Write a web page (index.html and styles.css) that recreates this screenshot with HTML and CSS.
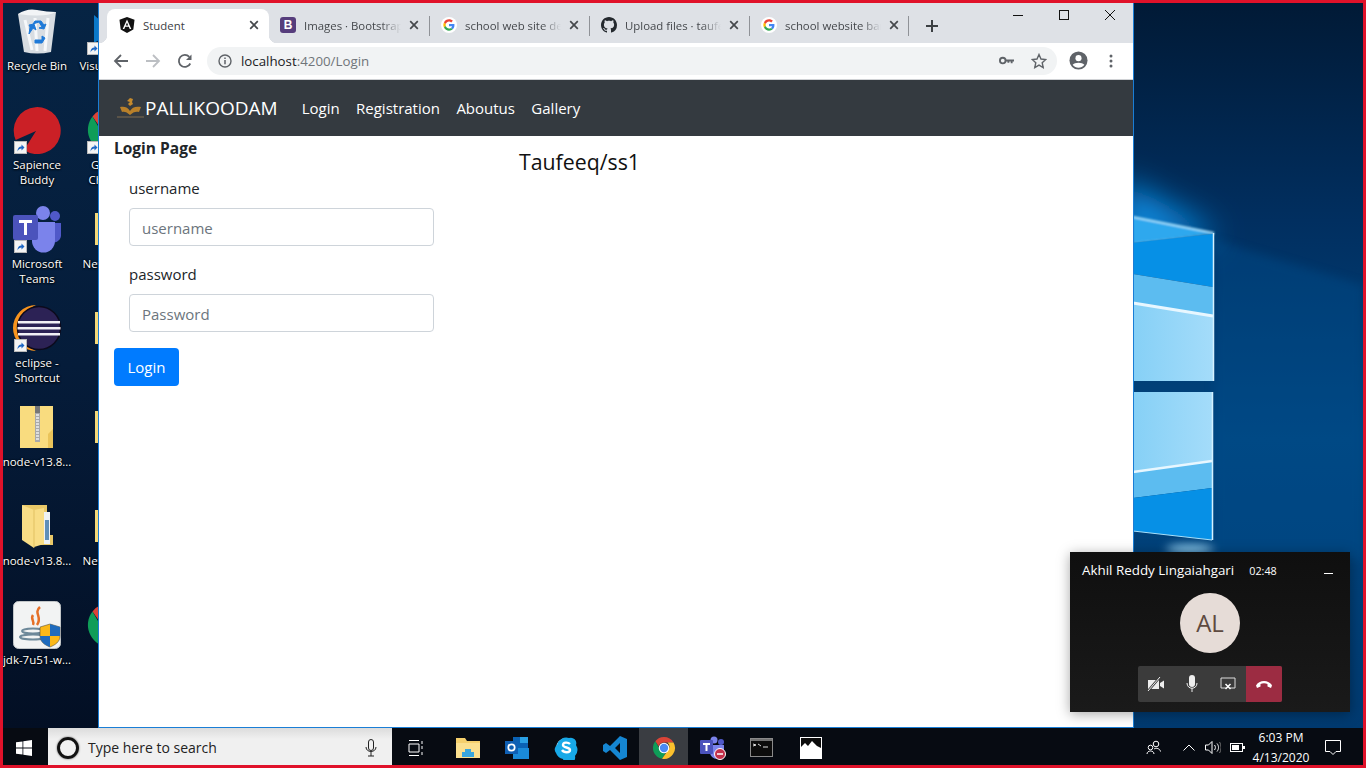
FILE: index.html
```html
<!DOCTYPE html>
<html lang="en">
<head>
<meta charset="utf-8">
<title>Student</title>
<link rel="stylesheet" href="styles.css">
</head>
<body>
<svg class="defs" width="0" height="0" aria-hidden="true">
  <defs>
    <symbol id="g-logo" viewBox="0 0 48 48">
      <circle cx="24" cy="24" r="24" fill="#fff"/>
      <g transform="translate(7 7) scale(.71)">
        <path fill="#EA4335" d="M24 9.5c3.54 0 6.71 1.22 9.21 3.6l6.85-6.85C35.9 2.38 30.47 0 24 0 14.62 0 6.51 5.38 2.56 13.22l7.98 6.19C12.43 13.72 17.74 9.5 24 9.5z"/>
        <path fill="#4285F4" d="M46.98 24.55c0-1.57-.15-3.09-.38-4.55H24v9.02h12.94c-.58 2.96-2.26 5.48-4.78 7.18l7.73 6c4.51-4.18 7.09-10.36 7.09-17.65z"/>
        <path fill="#FBBC05" d="M10.53 28.59c-.48-1.45-.76-2.99-.76-4.59s.27-3.14.76-4.59l-7.98-6.19C.92 16.46 0 20.12 0 24c0 3.88.92 7.54 2.56 10.78l7.97-6.19z"/>
        <path fill="#34A853" d="M24 48c6.48 0 11.93-2.13 15.89-5.81l-7.73-6c-2.15 1.45-4.92 2.3-8.16 2.3-6.26 0-11.57-4.22-13.47-9.91l-7.98 6.19C6.51 42.62 14.62 48 24 48z"/>
      </g>
    </symbol>
    <symbol id="close-x" viewBox="0 0 10 10">
      <path d="M1.2 1.2l7.6 7.6M8.8 1.2L1.2 8.8" stroke="#45484c" stroke-width="1.7" fill="none"/>
    </symbol>
    <symbol id="shortcut" viewBox="0 0 13 13">
      <rect width="13" height="13" fill="#f4f4f4"/>
      <rect x=".5" y=".5" width="12" height="12" fill="none" stroke="#b9b9b9"/>
      <path d="M3.5 10.5c0-3.5 1.5-5 4-5V3.5l3 3-3 3V7.500c-1.700 0-3 .8-4 3z" fill="#1c66c4"/>
    </symbol>
    <symbol id="chrome" viewBox="0 0 48 48">
      <path fill="#db4437" d="M24 2a22 22 0 0 1 19 11H24a11 11 0 0 0-10.500 7.500L6.500 10.500A22 22 0 0 1 24 2z"/>
      <path fill="#0f9d58" d="M6.500 10.500l9.500 16.500a11 11 0 0 0 11 7.700L20 45.600A22 22 0 0 1 6.500 10.500z"/>
      <path fill="#fbc02d" d="M43 13a22 22 0 0 1-23 32.600L31 30a11 11 0 0 0 0-17z"/>
      <circle cx="24" cy="24" r="10.500" fill="#fff"/>
      <circle cx="24" cy="24" r="8.300" fill="#4a8af4"/>
    </symbol>
    <symbol id="folder" viewBox="0 0 40 40">
      <path d="M5 4h30v32H5z" fill="#f6d978"/>
      <path d="M35 4v12l-4 4v16h4z" fill="#e8c55f"/>
    </symbol>
  </defs>
</svg>

<div class="screen">
  <div class="desktop">
    <svg class="wallpaper" viewBox="3 3 1360 725" preserveAspectRatio="none" aria-hidden="true">
      <defs>
        <linearGradient id="wall" x1="0" y1="0" x2="0" y2="1">
          <stop offset="0" stop-color="#011a36"/>
          <stop offset=".3" stop-color="#012f60"/>
          <stop offset=".6" stop-color="#01457f"/>
          <stop offset="1" stop-color="#003a70"/>
        </linearGradient>
        <linearGradient id="left" x1="0" y1="0" x2="0" y2="1">
          <stop offset="0" stop-color="#062444"/>
          <stop offset=".5" stop-color="#051c3a"/>
          <stop offset="1" stop-color="#030f24"/>
        </linearGradient>
        <linearGradient id="pane" x1="0" y1="0" x2="1" y2="0">
          <stop offset="0" stop-color="#86d0f6"/>
          <stop offset="1" stop-color="#a4dcfa"/>
        </linearGradient>
        <filter id="blur18" x="-60%" y="-60%" width="220%" height="220%"><feGaussianBlur stdDeviation="16"/></filter>
        <filter id="blur6" x="-40%" y="-80%" width="180%" height="260%"><feGaussianBlur stdDeviation="5"/></filter>
        <filter id="blur1" x="-20%" y="-20%" width="140%" height="140%"><feGaussianBlur stdDeviation=".8"/></filter>
      </defs>
      <rect x="3" y="3" width="1360" height="725" fill="url(#wall)"/>
      <rect x="3" y="3" width="130" height="725" fill="url(#left)"/>
      <path d="M1214 240L1363 285V560H1214z" fill="#01508f" opacity=".4" filter="url(#blur6)"/>
      <path d="M1120 180L1205 226L1214 240H1120z" fill="#0a8ee4" filter="url(#blur18)"/>
      <g filter="url(#blur1)">
        <path d="M1133 217L1214 233L1133 243z" fill="#2ea8ee"/>
        <path d="M1133 217L1214 233" stroke="#a8e0fb" stroke-width="2"/>
        <path d="M1133 243L1214 234" stroke="#5cc0f4" stroke-width="1"/>
      </g>
      <path d="M1133 243L1213 234V287L1133 274z" fill="#0690e6"/>
      <path d="M1133 274L1213 287V316L1133 303z" fill="#5cbcf0"/>
      <path d="M1133 303L1213 316V381H1133z" fill="url(#pane)"/>
      <path d="M1133 303L1213 316" stroke="#e8f7ff" stroke-width="3"/>
      <path d="M1133 392H1212V461L1133 472z" fill="url(#pane)"/>
      <path d="M1133 472L1212 461V488L1133 498z" fill="#5cbcf0"/>
      <path d="M1133 472L1212 461" stroke="#e8f7ff" stroke-width="2.500"/>
      <path d="M1133 498L1212 488V540L1133 531z" fill="#0690e6"/>
      <path d="M1133 531L1212 540" stroke="#a8e0fb" stroke-width="1"/>
      <path d="M1213.500 233V381M1212.500 392V540" stroke="#d5f1ff" stroke-width="1.500"/>
      <ellipse cx="1190" cy="549" rx="24" ry="4" fill="#9fdcfb" filter="url(#blur6)"/>
    </svg>

    <div class="icons">
      <div class="dicon">
        <div class="dicon-art">
          <svg width="44" height="46" viewBox="0 0 44 46">
            <path d="M3 6L41 4L36 44Q22 47 9 44z" fill="#d8dde2"/>
            <path d="M3 6Q12 0 22 2T41 4Q30 10 3 6z" fill="#f2f4f6"/>
            <path d="M10 12l7 30M20 10l2 33M33 10l-3 33" stroke="#f6f8fa" stroke-width="3" fill="none"/>
            <path d="M18 16l6-2 3 5-3 1 5 1 2-5-2 1-3-4h-6zM14 26l4-6 3 2-2-6-5 1 1 2zM20 35h7l3-5-3-2v4h-7z" fill="#1f7ad8" stroke="#1f7ad8" stroke-width="1"/>
          </svg>
        </div>
        <div class="dicon-label">Recycle Bin</div>
      </div>
      <div class="dicon">
        <div class="dicon-art">
          <svg width="40" height="44" viewBox="0 0 40 44"><path d="M4 6L20 20L36 2V38L20 24L4 34z" fill="#0a78c8"/></svg>
          <svg class="badge" width="13" height="13"><use href="#shortcut"/></svg>
        </div>
        <div class="dicon-label dicon-line">Visual Stu...</div>
      </div>

      <div class="dicon">
        <div class="dicon-art">
          <svg width="48" height="48" viewBox="0 0 48 48"><path d="M2.700 34A23.500 23.500 0 1 1 11 44L23 25z" fill="#cb2026"/></svg>
          <svg class="badge" width="13" height="13"><use href="#shortcut"/></svg>
        </div>
        <div class="dicon-label">Sapience Buddy</div>
      </div>
      <div class="dicon">
        <div class="dicon-art">
          <svg width="48" height="48"><use href="#chrome"/></svg>
          <svg class="badge" width="13" height="13"><use href="#shortcut"/></svg>
        </div>
        <div class="dicon-label">Google Chrome</div>
      </div>

      <div class="dicon">
        <div class="dicon-art">
          <svg width="50" height="48" viewBox="0 0 50 48">
            <circle cx="31" cy="8" r="7" fill="#7b83eb"/>
            <circle cx="43" cy="11" r="5" fill="#5059c9"/>
            <path d="M38 18h11v13a7 7 0 0 1-11 5z" fill="#5059c9"/>
            <path d="M20 17h23v19a11.500 11.500 0 0 1-23 0z" fill="#7b83eb"/>
            <rect x="1" y="10" width="25" height="25" rx="2" fill="#4b53bc"/>
            <path d="M7 15h13v3h-5v12h-3V18H7z" fill="#fff"/>
          </svg>
          <svg class="badge" width="13" height="13"><use href="#shortcut"/></svg>
        </div>
        <div class="dicon-label">Microsoft Teams</div>
      </div>
      <div class="dicon">
        <div class="dicon-art"><svg width="40" height="40"><use href="#folder"/></svg></div>
        <div class="dicon-label dicon-line dicon-shift">New folder</div>
      </div>

      <div class="dicon">
        <div class="dicon-art">
          <svg width="50" height="46" viewBox="0 0 50 46">
            <path d="M24 0A23 23 0 0 0 24 46A25 25 0 0 1 24 0z" fill="#f7941e"/>
            <circle cx="27" cy="23" r="21.500" fill="#2c2255" stroke="#0c0a1c" stroke-width="1.500"/>
            <path d="M6 16h42v2.500H6zM5.500 22h43v2.500h-43zM6 28h42v2.500H6z" fill="#f2f0f6"/>
          </svg>
          <svg class="badge" width="13" height="13"><use href="#shortcut"/></svg>
        </div>
        <div class="dicon-label">eclipse - Shortcut</div>
      </div>
      <div class="dicon">
        <div class="dicon-art"><svg width="40" height="40"><use href="#folder"/></svg></div>
        <div class="dicon-label"></div>
      </div>

      <div class="dicon">
        <div class="dicon-art">
          <svg width="36" height="44" viewBox="0 0 36 44">
            <path d="M1 1h33v42H1z" fill="#f9dc7f"/>
            <path d="M34 24l-5 5v14h5z" fill="#eac45a"/>
            <rect x="16" y="1" width="5" height="36" fill="#a9a9a9"/>
            <rect x="16" y="1" width="5" height="7" fill="#777"/>
            <path d="M17 10h3M17 13h3M17 16h3M17 19h3M17 22h3M17 25h3M17 28h3M17 31h3M17 34h3" stroke="#eee" stroke-width="1.500"/>
          </svg>
        </div>
        <div class="dicon-label dicon-line">node-v13.8...</div>
      </div>
      <div class="dicon">
        <div class="dicon-art"><svg width="40" height="40"><use href="#folder"/></svg></div>
        <div class="dicon-label"></div>
      </div>

      <div class="dicon">
        <div class="dicon-art">
          <svg width="32" height="44" viewBox="0 0 32 44">
            <path d="M1 1h25v30h6v10H12z" fill="#e9c868"/>
            <path d="M22 8h7v32h-7z" fill="#eef2f5"/>
            <path d="M24 16h4v20h-4z" fill="#5f8fb8"/>
            <path d="M13 6l10-2v36l-10 3z" fill="#f8dd86"/>
            <path d="M1 1l12 5v38L1 36z" fill="#f8dd86"/>
            <path d="M13 6v38" stroke="#d8b455" stroke-width=".7"/>
          </svg>
        </div>
        <div class="dicon-label dicon-line">node-v13.8...</div>
      </div>
      <div class="dicon">
        <div class="dicon-art"><svg width="40" height="40"><use href="#folder"/></svg></div>
        <div class="dicon-label dicon-line dicon-shift">New folder</div>
      </div>

      <div class="dicon">
        <div class="dicon-art">
          <svg width="48" height="48" viewBox="0 0 48 48">
            <rect x=".5" y=".5" width="47" height="47" rx="5" fill="#f2f3f3" stroke="#c2c6c8"/>
            <path d="M27 6c-7 6 3 10-3 18M20 14c-3 4 2 6 0 10" stroke="#e56f26" stroke-width="2.500" fill="none"/>
            <ellipse cx="20" cy="30" rx="11" ry="2.500" fill="none" stroke="#6d8899" stroke-width="2"/>
            <ellipse cx="20" cy="36" rx="13" ry="2.500" fill="none" stroke="#6d8899" stroke-width="2"/>
            <path d="M27 26l10-3 10 3v9c0 6-5 9-10 11-5-2-10-5-10-11z" fill="#fbb818" stroke="#3a3a3a" stroke-width=".5"/>
            <path d="M37 23l10 3v9H37zM27 35h10v11c-5-2-10-5-10-11z" fill="#1f6bbd"/>
          </svg>
        </div>
        <div class="dicon-label dicon-line">jdk-7u51-w...</div>
      </div>
      <div class="dicon">
        <div class="dicon-art"><svg width="48" height="48"><use href="#chrome"/></svg></div>
        <div class="dicon-label"></div>
      </div>
    </div>

    <section class="browser">
      <div class="tabstrip">
        <div class="tab tab-active">
          <svg class="favicon" viewBox="0 0 16 16"><path d="M8 0l7.500 2.700-1.200 9.900L8 16l-6.300-3.400L.5 2.700z" fill="#111"/><path d="M8 2.500L3.700 12h1.600l.9-2.200h3.600l.9 2.200h1.600zM6.800 8.500L8 5.600l1.200 2.900z" fill="#fff"/></svg>
          <span class="tab-title">Student</span>
          <svg class="tab-close" width="10" height="10"><use href="#close-x"/></svg>
        </div>
        <div class="tab tab-first">
          <span class="bs-icon">B</span>
          <span class="tab-title">Images · Bootstrap</span>
          <svg class="tab-close" width="10" height="10"><use href="#close-x"/></svg>
        </div>
        <div class="tab tab-sep">
          <svg class="favicon"><use href="#g-logo"/></svg>
          <span class="tab-title">school web site design</span>
          <svg class="tab-close" width="10" height="10"><use href="#close-x"/></svg>
        </div>
        <div class="tab tab-sep">
          <svg class="favicon" viewBox="0 0 16 16"><path fill="#24292e" d="M8 0C3.580 0 0 3.580 0 8c0 3.540 2.290 6.530 5.470 7.590.4.070.55-.17.55-.38 0-.19-.01-.82-.01-1.490-2.010.37-2.530-.49-2.690-.94-.09-.23-.48-.94-.82-1.130-.28-.15-.68-.52-.01-.53.63-.01 1.080.58 1.230.82.72 1.210 1.870.87 2.330.66.07-.52.28-.87.51-1.070-1.780-.2-3.640-.89-3.640-3.950 0-.87.31-1.590.82-2.150-.08-.2-.36-1.020.08-2.120 0 0 .67-.21 2.200.82.64-.18 1.320-.27 2-.27.68 0 1.360.09 2 .27 1.530-1.040 2.200-.82 2.200-.82.44 1.100.16 1.920.08 2.120.51.56.82 1.270.82 2.150 0 3.070-1.870 3.750-3.650 3.950.29.25.54.73.54 1.480 0 1.070-.01 1.930-.01 2.200 0 .21.15.46.55.38A8.013 8.013 0 0 0 16 8c0-4.420-3.580-8-8-8z"/></svg>
          <span class="tab-title">Upload files · taufeeq</span>
          <svg class="tab-close" width="10" height="10"><use href="#close-x"/></svg>
        </div>
        <div class="tab tab-sep tab-end">
          <svg class="favicon"><use href="#g-logo"/></svg>
          <span class="tab-title">school website banner</span>
          <svg class="tab-close" width="10" height="10"><use href="#close-x"/></svg>
        </div>
        <svg class="newtab" width="12" height="12" viewBox="0 0 12 12"><path d="M6 0v12M0 6h12" stroke="#3c4043" stroke-width="2"/></svg>
        <div class="winctl">
          <svg width="10" height="10" viewBox="0 0 10 10"><path d="M0 5.500h10" stroke="#111"/></svg>
          <svg width="10" height="10" viewBox="0 0 10 10"><rect x=".5" y=".5" width="9" height="9" fill="none" stroke="#111"/></svg>
          <svg width="10" height="10" viewBox="0 0 10 10"><path d="M0 0l10 10M10 0L0 10" stroke="#111"/></svg>
        </div>
      </div>

      <div class="toolbar">
        <svg class="tb-btn" viewBox="0 0 16 16"><path d="M15 8H2.500M8 2L2 8l6 6" fill="none" stroke="#5f6368" stroke-width="1.800"/></svg>
        <svg class="tb-btn" viewBox="0 0 16 16"><path d="M1 8h12.500M8 2l6 6-6 6" fill="none" stroke="#bcbfc3" stroke-width="1.800"/></svg>
        <svg class="tb-btn tb-reload" viewBox="0 0 16 16"><path d="M13.300 10.500A6 6 0 1 1 12.300 3.800" fill="none" stroke="#5f6368" stroke-width="1.800"/><path d="M14.500 1.500v5.500H9z" fill="#5f6368"/></svg>
        <div class="omnibox">
          <svg class="omni-info" viewBox="0 0 14 14"><circle cx="7" cy="7" r="6" fill="none" stroke="#5f6368" stroke-width="1.400"/><path d="M7 6v4.200M7 3.500v1.500" stroke="#5f6368" stroke-width="1.500"/></svg>
          <span class="url"><span class="url-host">localhost</span>:4200/Login</span>
          <svg class="omni-key" viewBox="0 0 16 9"><circle cx="4" cy="4.500" r="3" fill="none" stroke="#5f6368" stroke-width="2"/><path d="M7 3.500h9v2h-1.500v2h-2v-2H11v1.500H9V5.500H7z" fill="#5f6368"/></svg>
          <svg class="omni-star" viewBox="0 0 16 16"><path d="M8 1.500l2 4.500 4.800.5-3.600 3.200 1 4.800L8 12.100l-4.200 2.400 1-4.800L1.200 6.500 6 6z" fill="none" stroke="#5f6368" stroke-width="1.400"/></svg>
        </div>
        <svg class="tb-profile" viewBox="0 0 20 20"><circle cx="10" cy="10" r="9.500" fill="#5f6368"/><circle cx="10" cy="7.500" r="3.200" fill="#fff"/><path d="M3.800 14.500c2-3 10.400-3 12.400 0-3 4-9.400 4-12.400 0z" fill="#fff"/></svg>
        <svg class="tb-dots" viewBox="0 0 4 14"><circle cx="2" cy="2" r="1.500" fill="#5f6368"/><circle cx="2" cy="7" r="1.500" fill="#5f6368"/><circle cx="2" cy="12" r="1.500" fill="#5f6368"/></svg>
      </div>

      <nav class="navbar">
        <svg class="brand-logo" width="29" height="24" viewBox="0 0 29 24">
          <path d="M14 2l3 1-1 3 1 2-3 2-2-2 2-2-3-1z" fill="#c58a2c"/>
          <path d="M4 11c4-1 8 0 10 4 2-4 6-5 11-4l-2 5c-3-1-6 0-9 3-3-3-6-4-8-3z" fill="#b9802a"/>
          <path d="M1 20h27v2H1z" fill="#5a5348"/>
        </svg>
        <a class="brand">PALLIKOODAM</a>
        <a class="navlink">Login</a>
        <a class="navlink">Registration</a>
        <a class="navlink">Aboutus</a>
        <a class="navlink">Gallery</a>
      </nav>

      <main class="page">
        <div class="login-col">
          <h1 class="login-title">Login Page</h1>
          <form class="login-form">
            <div class="form-group">
              <label class="form-label">username</label>
              <input class="form-input" type="text" placeholder="username">
            </div>
            <div class="form-group">
              <label class="form-label">password</label>
              <input class="form-input" type="password" placeholder="Password">
            </div>
          </form>
          <button class="login-btn" type="button">Login</button>
        </div>
        <h2 class="repo-title">Taufeeq/ss1</h2>
      </main>
    </section>

    <aside class="call">
      <div class="call-head">
        <span class="call-name">Akhil Reddy Lingaiahgari</span>
        <span class="call-time">02:48</span>
        <span class="call-min"></span>
      </div>
      <div class="call-avatar">AL</div>
      <div class="call-controls">
        <span class="call-btn"><svg width="18" height="16" viewBox="0 0 18 16"><path d="M1 4h11v9H1zM13 7l4-2.500v8L13 10z" fill="#eee"/><path d="M1 15L13 1" stroke="#3b3b3b" stroke-width="2.500"/><path d="M1 15L13 1" stroke="#eee" stroke-width="1"/></svg></span>
        <span class="call-btn"><svg width="12" height="18" viewBox="0 0 12 18"><rect x="3" y="0" width="6" height="12" rx="3" fill="#eee"/><path d="M1 8c0 7 10 7 10 0M6 13v4" fill="none" stroke="#eee" stroke-width="1"/></svg></span>
        <span class="call-btn"><svg width="16" height="14" viewBox="0 0 16 14"><path d="M6 11H1V1h14v10h-5" fill="none" stroke="#ddd"/><path d="M5.500 7l5 5M10.500 7l-5 5" stroke="#fff" stroke-width="1.500"/></svg></span>
        <span class="call-btn call-hang"><svg width="16" height="8" viewBox="0 0 16 8"><path d="M0 5.500C3-.5 13-.5 16 5.500L15 8l-3.500-1.500V4c-2-1-5-1-7 0v2.500L1 8z" fill="#fff"/></svg></span>
      </div>
    </aside>
  </div>

  <footer class="taskbar">
    <div class="start"><svg width="16" height="16" viewBox="0 0 16 16"><path d="M0 2.300l6.500-.9v6.200H0zM7.300 1.300L16 0v7.600H7.300zM0 8.400h6.500v6.200L0 13.700zM7.300 8.400H16V16l-8.700-1.300z" fill="#fff"/></svg></div>
    <div class="search">
      <span class="cortana"></span>
      <span class="search-text">Type here to search</span>
      <svg width="12" height="18" viewBox="0 0 12 18"><rect x="3.500" y=".5" width="5" height="11" rx="2.500" fill="none" stroke="#222"/><path d="M1 8c0 6 10 6 10 0M6 13v4M3 17h6" fill="none" stroke="#222"/></svg>
    </div>
    <div class="task task-view"><svg width="16" height="16" viewBox="0 0 16 16"><path d="M1 .5h10M1 15.500h10M1 4h10v8H1zM14 1v3M14 6v3M14 12v3" fill="none" stroke="#fff"/></svg></div>
    <div class="task"><svg width="24" height="20" viewBox="0 0 24 20"><path d="M0 0h9l2 3h13v17H0z" fill="#f5d06d"/><path d="M0 5h24v15H0z" fill="#fbe08f"/><path d="M6 19v-5h3v-3h6v3h3v5z" fill="#3aa7dd"/></svg></div>
    <div class="task"><svg width="24" height="22" viewBox="0 0 24 22"><path d="M8 0h15v17H8z" fill="#0a62b4"/><path d="M15 0h8v6h-8z" fill="#2aa0e4"/><path d="M8 11l16 0v11H8z" fill="#1a8ad8"/><rect x="0" y="4" width="13" height="13" fill="#0f5fb3"/><circle cx="6.500" cy="10.500" r="3.200" fill="none" stroke="#fff" stroke-width="1.700"/></svg></div>
    <div class="task"><svg width="24" height="24" viewBox="0 0 24 24"><circle cx="12" cy="12" r="10" fill="#fff"/><path d="M3 9a9.500 9.500 0 0 1 12-7 5.500 5.500 0 0 1 7 7 9.500 9.500 0 0 1-1 11 5.500 5.500 0 0 1-12 3 9.500 9.500 0 0 1-7-6 5.500 5.500 0 0 1 1-8z" fill="#17a9e8"/><path d="M16 8c-2-2-7-2-7 1 0 3 7 2 7 5 0 3-6 3-8 0" fill="none" stroke="#fff" stroke-width="2.400"/></svg></div>
    <div class="task"><svg width="24" height="24" viewBox="0 0 24 24"><path d="M17 0l7 3v18l-7 3L7 14l-4 3-3-2v-6l3-2 4 3zM17 7l-5 5 5 5z" fill="#1586d2"/></svg></div>
    <div class="task task-active"><svg width="24" height="24"><use href="#chrome"/></svg></div>
    <div class="task"><svg width="26" height="24" viewBox="0 0 26 24">
      <circle cx="14" cy="4" r="3.500" fill="#7b83eb"/><circle cx="21" cy="6" r="3" fill="#5059c9"/>
      <path d="M10 9h14v7a7 7 0 0 1-14 0z" fill="#7b83eb"/><rect y="4" width="13" height="14" rx="1" fill="#4b53bc"/><path d="M3 7h7v2H7.500v6h-2V9H3z" fill="#fff"/>
      <circle cx="20" cy="18" r="5.500" fill="#c4314b" stroke="#fff"/><path d="M17 18h6" stroke="#fff" stroke-width="1.500"/></svg></div>
    <div class="task"><svg width="23" height="19" viewBox="0 0 23 19"><rect x=".5" y=".5" width="22" height="18" fill="#0c0c0c" stroke="#8a8a8a"/><path d="M1 1h21v2H1z" fill="#d8d8d8" opacity=".5"/><path d="M3 6l3 1-3 1M8 6l3 2M13 9h5" stroke="#ddd" fill="none"/></svg></div>
    <div class="task"><svg width="22" height="22" viewBox="0 0 22 22"><rect x=".5" y=".5" width="21" height="21" fill="#0c0c0c" stroke="#fff"/><path d="M1 21V10l4-4 3 3 4-5 5 5 4 2v10z" fill="#fff"/></svg></div>

    <div class="tray">
      <span class="tray-item tray-people"><svg width="15" height="15" viewBox="0 0 15 15"><circle cx="10" cy="4" r="2.800" fill="none" stroke="#fff"/><circle cx="4.500" cy="7.500" r="2.300" fill="none" stroke="#fff"/><path d="M1 14c0-4 7-4 7 0M8 9c2-1.500 6-.5 6.500 2.500" fill="none" stroke="#fff"/></svg></span>
      <span class="tray-item tray-chev"><svg width="12" height="7" viewBox="0 0 12 7"><path d="M.5 6.500L6 1l5.500 5.500" fill="none" stroke="#fff"/></svg></span>
      <span class="tray-item tray-vol"><svg width="16" height="13" viewBox="0 0 16 13"><path d="M.5 4h3L7 .5v12L3.500 9h-3z" fill="none" stroke="#fff"/><path d="M9.500 4c1.200 1.500 1.200 3.500 0 5M12 2.500c2 2.500 2 5.500 0 8" fill="none" stroke="#fff"/><path d="M14.500 1c2 3 2 8 0 11" fill="none" stroke="#777"/></svg></span>
      <span class="tray-item tray-bat"><svg width="15" height="9" viewBox="0 0 15 9"><rect x=".5" y=".5" width="12" height="8" fill="none" stroke="#fff"/><rect x="2" y="2" width="7" height="5" fill="#fff"/><rect x="13" y="3" width="2" height="3" fill="#fff"/></svg></span>
      <span class="clock"><span>6:03 PM</span><span>4/13/2020</span></span>
      <span class="tray-item tray-note"><svg width="16" height="15" viewBox="0 0 16 15"><path d="M.5.500h15v11H11L8 14.500 5 11.500H.5z" fill="none" stroke="#fff"/></svg></span>
    </div>
  </footer>
</div>
</body>
</html>
```

FILE: styles.css
```css
* { box-sizing: border-box; }
html, body { margin: 0; height: 100%; }
body { font-family: "Open Sans", "Liberation Sans", sans-serif; overflow: hidden; }
.defs { position: absolute; }

.screen {
  width: 1366px; height: 768px; padding: 3px;
  background: #e0122a;
  display: flex; flex-direction: column;
}
.desktop { position: relative; height: 725px; overflow: hidden; }
.wallpaper { position: absolute; inset: 0; width: 100%; height: 100%; display: block; }

/* desktop icons */
.icons {
  position: relative;
  display: grid;
  grid-template-columns: 68px 78px;
  grid-auto-rows: 99px;
  width: 146px;
}
.dicon { display: flex; flex-direction: column; align-items: center; padding-top: 4px; color: #fff; }
.dicon-art { position: relative; height: 48px; width: 52px; display: flex; align-items: center; justify-content: center; margin-bottom: 3px; flex: none; }
.badge { position: absolute; left: 3px; bottom: 0; }
.dicon-label {
  font-size: 11.5px; line-height: 15px; text-align: center;
  text-shadow: 0 1px 2px #000, 0 0 2px #000;
  max-width: 70px;
}
.dicon-line { white-space: nowrap; max-width: none; }
.dicon-shift { padding-left: 4px; }

/* browser window */
.browser {
  position: absolute; left: 95px; top: 0;
  width: 1036px; height: 725px;
  background: #fff;
  border: 1px solid #1a7ed6; border-top: 0;
  display: flex; flex-direction: column;
}
.tabstrip {
  height: 40px; flex: none;
  background: #dee1e6;
  display: flex; align-items: flex-end;
  padding-left: 8px;
  position: relative;
}
.tab {
  width: 160px; height: 34px; flex: none;
  display: flex; align-items: center;
  padding: 0 10px 2px 12px;
  gap: 8px;
  position: relative;
  font-size: 11.4px; color: #45484c;
}
.tab-first { padding-left: 11px; }
.tab-active {
  width: 162px; background: #fff;
  border-radius: 8px 8px 0 0;
  color: #3c4043;
}
.tab-active::before, .tab-active::after {
  content: ""; position: absolute; bottom: 0; width: 8px; height: 8px;
}
.tab-active::before { left: -8px; background: radial-gradient(circle at 0 0, transparent 8px, #fff 8.5px); }
.tab-active::after { right: -8px; background: radial-gradient(circle at 100% 0, transparent 8px, #fff 8.5px); }
.tab-sep::before {
  content: ""; position: absolute; left: 0; top: 7px; height: 20px; width: 1px; background: #8f9297;
}
.tab-end::after {
  content: ""; position: absolute; right: 0; top: 7px; height: 20px; width: 1px; background: #8f9297;
}
.favicon { width: 16px; height: 16px; flex: none; }
.bs-icon {
  width: 16px; height: 16px; flex: none; border-radius: 3px;
  background: #563d7c; color: #fff;
  font: 700 12px/16px "Liberation Sans", sans-serif; text-align: center;
}
.tab-title {
  flex: 1; min-width: 0; white-space: nowrap; overflow: hidden;
  -webkit-mask-image: linear-gradient(to right, #000 80%, transparent 100%);
          mask-image: linear-gradient(to right, #000 80%, transparent 100%);
}
.tab-active .tab-title { -webkit-mask-image: none; mask-image: none; }
.tab-close { flex: none; }
.newtab { flex: none; margin: 0 0 11px 17px; }
.winctl {
  margin-left: auto; align-self: flex-start;
  display: flex; gap: 36px;
  padding: 7px 18px 0 0;
}

.toolbar {
  height: 37px; flex: none; background: #fff;
  border-bottom: 1px solid #d0d2d5;
  display: flex; align-items: center;
  padding: 0 14px 1px 14px;
}
.tb-btn { width: 16px; height: 16px; margin-right: 16px; flex: none; }
.tb-reload { margin-right: 14px; }
.omnibox {
  width: 850px; height: 28px; flex: none;
  background: #f1f3f4; border-radius: 14px;
  display: flex; align-items: center;
  padding-left: 11px;
}
.omni-info { width: 14px; height: 14px; flex: none; }
.url { margin-left: 9px; font-size: 13.3px; color: #70757a; flex: 1; }
.url-host { color: #202124; }
.omni-key { width: 15px; height: 9px; margin-right: 17px; flex: none; }
.omni-star { width: 16px; height: 16px; margin-right: 10px; flex: none; }
.tb-profile { width: 19px; height: 19px; margin-left: 12px; flex: none; }
.tb-dots { width: 4px; height: 14px; margin-left: 21px; flex: none; }

.navbar {
  height: 56px; flex: none; background: #343a40;
  display: flex; align-items: center;
  padding-left: 17px;
  color: #fff;
}
.brand-logo { flex: none; }
.brand { font-size: 19px; margin-right: 24px; }
.navlink { font-size: 15px; margin-right: 16.4px; }

.page { flex: 1; display: flex; padding-left: 15px; color: #212529; }
.login-col { width: 405px; flex: none; }
.login-title { margin: 0 0 16px; font-size: 15.5px; font-weight: 700; line-height: 24px; }
.login-form { padding-left: 15px; width: 320px; }
.form-group { margin-bottom: 16px; }
.form-label { display: block; font-size: 15px; line-height: 24px; margin-bottom: 8px; }
.form-input {
  display: block; width: 305px; height: 38px;
  border: 1px solid #ced4da; border-radius: 4px;
  padding: 1px 12px 0; font: 15px "Open Sans", sans-serif; color: #495057; background: #fff;
}
.form-input::placeholder { color: #6c757d; opacity: 1; }
.login-btn {
  display: block; width: 65px; height: 38px;
  background: #007bff; color: #fff;
  border: 0; border-radius: 4px;
  font: 15px "Open Sans", sans-serif;
  padding: 0;
}
.repo-title { margin: 12px 0 0; font-size: 21.3px; font-weight: 400; line-height: 28px; color: #111; }

/* call window */
.call {
  position: absolute; left: 1067px; top: 549px;
  width: 280px; height: 160px;
  background: linear-gradient(#0f0f0f, #1a1a1a);
  box-shadow: 0 2px 12px rgba(0,0,0,.35);
  display: flex; flex-direction: column; align-items: center;
  color: #fff;
}
.call-head {
  align-self: stretch; height: 38px; flex: none;
  display: flex; align-items: center;
  padding: 0 17px 2px 12px;
}
.call-name { font-size: 13.4px; }
.call-time { font-size: 10.8px; margin-left: 15px; }
.call-min { margin-left: auto; width: 9px; height: 1px; background: #fff; margin-top: 6px; }
.call-avatar {
  width: 60px; height: 60px; border-radius: 50%;
  background: #e6dcd7; color: #5e4a40;
  margin-top: 3px;
  font-size: 24px; line-height: 60px; text-align: center;
}
.call-controls {
  margin-top: 13px; height: 36px; width: 144px;
  display: flex; background: #3b3b3b; border-radius: 2px; overflow: hidden;
}
.call-btn { width: 36px; display: flex; align-items: center; justify-content: center; }
.call-hang { background: #9c2c42; }

/* taskbar */
.taskbar {
  height: 37px; flex: none; background: #070b12;
  display: flex; align-items: stretch;
}
.start { width: 45px; display: flex; align-items: center; justify-content: center; padding: 2px 3px 0 0; }
.search {
  width: 344px;
  background: linear-gradient(#dcdcdc, #f0f0f0 30%);
  display: flex; align-items: center;
  padding: 2px 15px 0 9px;
}
.cortana { width: 22px; height: 22px; border-radius: 50%; border: 3px solid #111; flex: none; box-shadow: 0 0 2px #555; }
.search-text { margin-left: 9px; font-size: 14px; color: #222; flex: 1; }
.task { width: 49px; display: flex; align-items: center; justify-content: center; padding-top: 2px; }
.task-view { width: 48px; margin-right: 3px; }
.task-active { background: #3a3d42; }
.tray { margin-left: auto; display: flex; align-items: center; padding: 2px 9px 0 0; color: #fff; }
.tray-item { display: flex; align-items: center; justify-content: center; }
.tray-people { width: 36px; margin-right: 6px; }
.tray-chev { width: 24px; }
.tray-vol { width: 23px; }
.tray-bat { width: 26px; }
.clock { width: 62px; display: flex; flex-direction: column; align-items: center; font-size: 12px; line-height: 20px; }
.tray-note { width: 42px; }
```
